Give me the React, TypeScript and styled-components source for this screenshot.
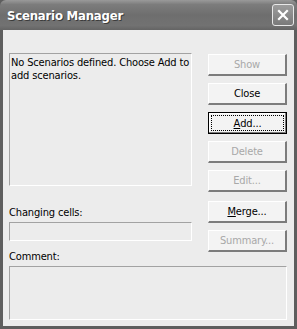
import styled, { createGlobalStyle } from "styled-components";

const GlobalStyle = createGlobalStyle`
  html, body {
    margin: 0;
    padding: 0;
    background: #ffffff;
  }
  body {
    font-family: "DejaVu Sans Condensed", "DejaVu Sans", sans-serif;
    font-size: 11px;
    letter-spacing: -0.15px;
  }
`;

type ButtonSpec = {
  label: string;
  hotkey?: number;
  disabled?: boolean;
  focused?: boolean;
  spaced?: boolean;
};

const buttons: ButtonSpec[] = [
  { label: "Show", disabled: true },
  { label: "Close" },
  { label: "Add...", hotkey: 0, focused: true },
  { label: "Delete", disabled: true },
  { label: "Edit...", disabled: true },
  { label: "Merge...", hotkey: 0, spaced: true },
  { label: "Summary...", disabled: true },
];

const CloseIcon = () => (
  <svg width="12" height="12" viewBox="0 0 12 12">
    <path
      d="M2 2 L10 10 M10 2 L2 10"
      stroke="#ffffff"
      strokeWidth="2.2"
      strokeLinecap="square"
    />
  </svg>
);

const renderLabel = (b: ButtonSpec) => {
  if (b.hotkey === undefined) return b.label;
  const i = b.hotkey;
  return (
    <>
      {b.label.slice(0, i)}
      <u>{b.label[i]}</u>
      {b.label.slice(i + 1)}
    </>
  );
};

const App = () => {
  return (
    <>
      <GlobalStyle />
      <Window>
        <TitleBar>
          <Title>Scenario Manager</Title>
          <CloseButton>
            <CloseIcon />
          </CloseButton>
        </TitleBar>
        <Body>
          <TopArea>
            <LeftColumn>
              <ListBox>No Scenarios defined. Choose Add to add scenarios.</ListBox>
              <FieldLabel $gap={20}>Changing cells:</FieldLabel>
              <TextBox />
              <FieldLabel $gap={9}>Comment:</FieldLabel>
            </LeftColumn>
            <ButtonColumn>
              {buttons.map((b) => (
                <Button
                  key={b.label}
                  $disabled={b.disabled}
                  $focused={b.focused}
                  $spaced={b.spaced}
                >
                  <ButtonText $focused={b.focused}>{renderLabel(b)}</ButtonText>
                </Button>
              ))}
            </ButtonColumn>
          </TopArea>
          <CommentBox />
        </Body>
      </Window>
    </>
  );
};

const Window = styled.div`
  width: 297px;
  height: 329px;
  display: flex;
  flex-direction: column;
  background: #5e5e5e;
  overflow: hidden;
`;

const TitleBar = styled.div`
  height: 30px;
  flex: none;
  display: flex;
  align-items: center;
  justify-content: space-between;
  padding: 0 3px 0 7px;
  box-sizing: border-box;
  border-radius: 6px 6px 0 0;
  background: linear-gradient(
    to bottom,
    #9a9a9a 0%,
    #7c7c7c 15%,
    #6e6e6e 50%,
    #727272 85%,
    #646464 100%
  );
`;

const Title = styled.span`
  font-family: "DejaVu Sans Condensed", "DejaVu Sans", sans-serif;
  font-weight: bold;
  font-size: 13px;
  letter-spacing: -0.2px;
  color: #ffffff;
  text-shadow: 1px 1px 0 #3c3c3c;
`;

const CloseButton = styled.div`
  width: 22px;
  height: 22px;
  box-sizing: border-box;
  border: 1px solid #e8e8e8;
  border-radius: 3px;
  background: linear-gradient(to bottom, #9c9c9c, #7a7a7a);
  display: flex;
  align-items: center;
  justify-content: center;
`;

const Body = styled.div`
  flex: 1;
  margin: 0 3px 4px 3px;
  background: #ececec;
  padding: 23px 7px 6px 6px;
  display: flex;
  flex-direction: column;
`;

const TopArea = styled.div`
  display: grid;
  grid-template-columns: 183px 79px;
  column-gap: 16px;
  align-items: start;
`;

const LeftColumn = styled.div`
  display: flex;
  flex-direction: column;
`;

const sunken = `
  box-sizing: border-box;
  border-style: solid;
  border-width: 1px;
  border-color: #a2a2a2 #ffffff #ffffff #a2a2a2;
`;

const ListBox = styled.div`
  ${sunken}
  height: 133px;
  padding: 2px 1px;
  color: #000000;
  line-height: 13px;
  background: #ececec;
`;

const FieldLabel = styled.div<{ $gap: number }>`
  color: #000000;
  line-height: 13px;
  margin: ${(p) => p.$gap}px 0 3px 0;
`;

const TextBox = styled.div`
  ${sunken}
  height: 19px;
`;

const CommentBox = styled.div`
  ${sunken}
  height: 54px;
`;

const ButtonColumn = styled.div`
  display: flex;
  flex-direction: column;
  gap: 7px;
  padding-top: 1px;
`;

const Button = styled.div<{
  $disabled?: boolean;
  $focused?: boolean;
  $spaced?: boolean;
}>`
  height: 22px;
  box-sizing: border-box;
  display: flex;
  align-items: stretch;
  background: #f3f3f3;
  border-style: solid;
  border-width: 1px 2px 2px 1px;
  border-color: #ffffff #7c7c7c #7c7c7c #ffffff;
  color: ${(p) => (p.$disabled ? "#a8a8a8" : "#000000")};
  margin-top: ${(p) => (p.$spaced ? "2px" : "0")};

  ${(p) =>
    p.$focused &&
    `
    border: 1px solid #000000;
    box-shadow: inset -1px -1px 0 #7c7c7c, inset 1px 1px 0 #ffffff;
  `}
`;

const ButtonText = styled.span<{ $focused?: boolean }>`
  flex: 1;
  display: flex;
  align-items: center;
  justify-content: center;
  line-height: 13px;
  ${(p) =>
    p.$focused &&
    `
    margin: 2px;
    border: 1px dotted #000000;
  `}
`;

export default App;
